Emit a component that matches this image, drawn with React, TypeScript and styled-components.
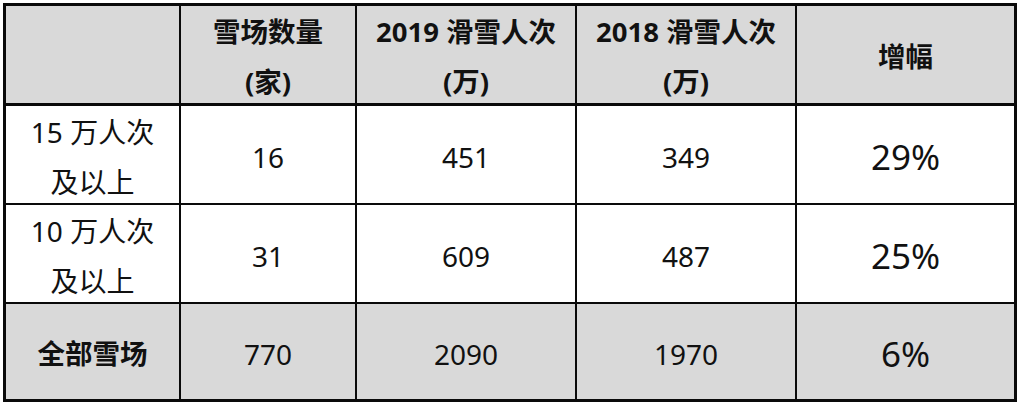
import React from 'react';
import styled, { createGlobalStyle } from 'styled-components';

const GlobalStyle = createGlobalStyle`
  html, body {
    margin: 0;
    padding: 0;
    background: #ffffff;
  }
`;

const Page = styled.div`
  width: 1024px;
  height: 407px;
  padding: 3px;
  box-sizing: border-box;
  background: #ffffff;
  font-family: 'Noto Sans', 'Noto Sans CJK SC', sans-serif;
  color: #111111;
`;

const Table = styled.div`
  display: grid;
  grid-template-columns: 173px 174px 218px 218px 217px;
  grid-template-rows: 98px 97px 97px 95px;
  gap: 2px;
  padding: 3px;
  width: max-content;
  background: #0a0a0a;
`;

const Cell = styled.div<{ $grey?: boolean; $head?: boolean; $bold?: boolean; $big?: boolean }>`
  background: ${(p) => (p.$grey ? '#d9d9d9' : '#ffffff')};
  margin-bottom: ${(p) => (p.$head ? '1px' : '0')};
  display: flex;
  flex-direction: column;
  align-items: center;
  justify-content: center;
  text-align: center;
  font-size: ${(p) => (p.$big ? '35px' : p.$bold ? '27.5px' : '28px')};
  font-weight: ${(p) => (p.$bold ? 700 : 400)};
  line-height: 50px;
  padding-top: 5px;
  box-sizing: border-box;
  white-space: nowrap;
`;

const headers = [
  ['', ''],
  ['雪场数量', '(家)'],
  ['2019 滑雪人次', '(万)'],
  ['2018 滑雪人次', '(万)'],
  ['增幅', ''],
];

const rows = [
  { label: ['15 万人次', '及以上'], values: ['16', '451', '349'], growth: '29%' },
  { label: ['10 万人次', '及以上'], values: ['31', '609', '487'], growth: '25%' },
];

const App = (): JSX.Element => (
  <Page>
    <GlobalStyle />
    <Table>
      {headers.map((h, i) => (
        <Cell key={'h' + i} $grey $head $bold>
          {h[0] && <span>{h[0]}</span>}
          {h[1] && <span>{h[1]}</span>}
        </Cell>
      ))}
      {rows.map((r, i) => (
        <React.Fragment key={'r' + i}>
          <Cell>
            <span>{r.label[0]}</span>
            <span>{r.label[1]}</span>
          </Cell>
          {r.values.map((v, j) => (
            <Cell key={j}>{v}</Cell>
          ))}
          <Cell $big>{r.growth}</Cell>
        </React.Fragment>
      ))}
      <Cell $grey $bold>全部雪场</Cell>
      <Cell $grey>770</Cell>
      <Cell $grey>2090</Cell>
      <Cell $grey>1970</Cell>
      <Cell $grey $big>6%</Cell>
    </Table>
  </Page>
);

export default App;
